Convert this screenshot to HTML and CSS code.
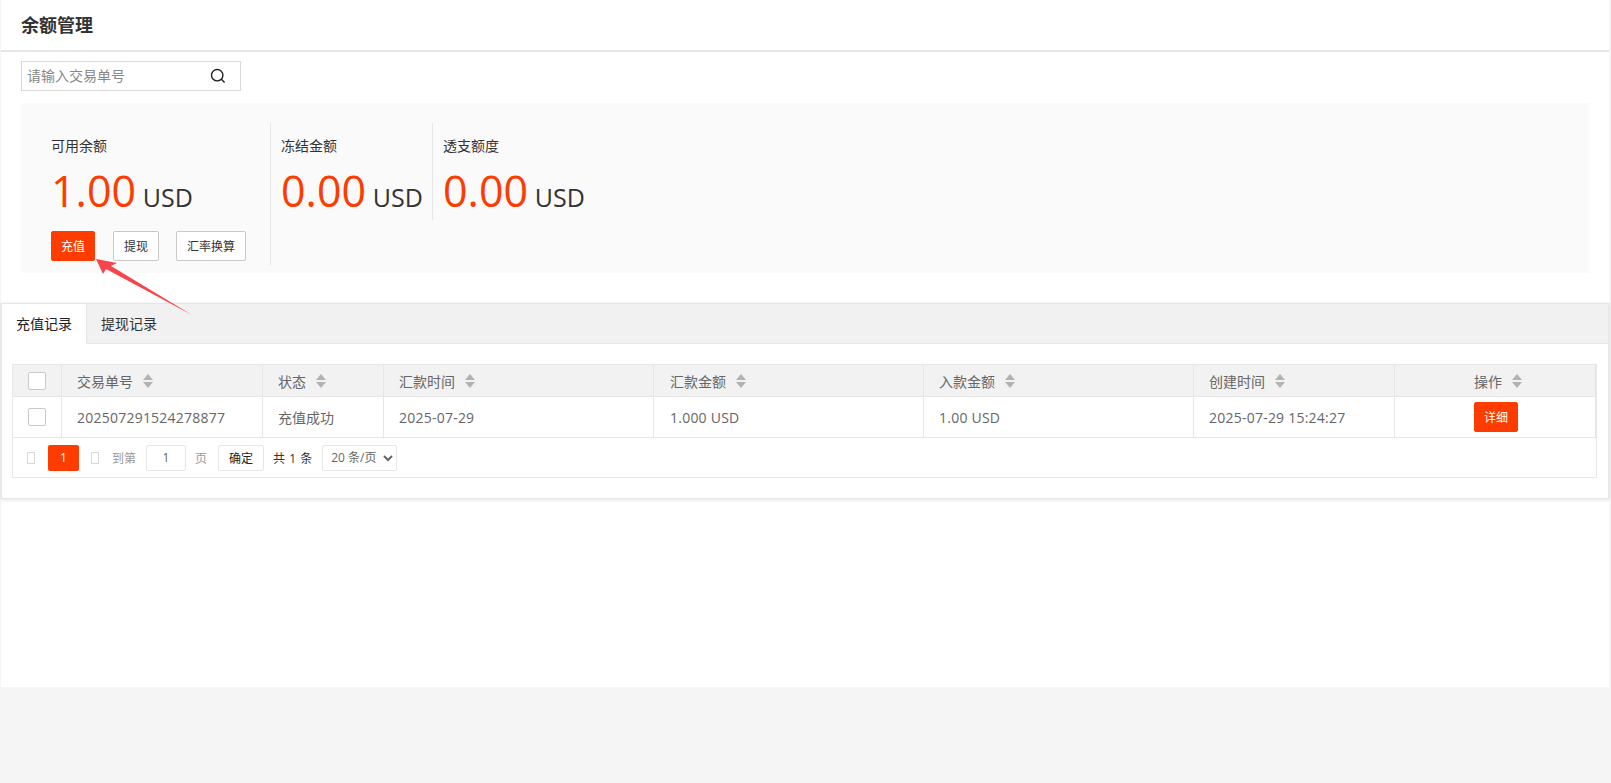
FILE: index.html
```html
<!DOCTYPE html>
<html lang="zh">
<head>
<meta charset="utf-8">
<title>余额管理</title>
<link rel="stylesheet" href="styles.css">
</head>
<body>
<main class="page">
  <header class="page-head"><h1>余额管理</h1></header>
  <div class="search">
    <input class="search-input" placeholder="请输入交易单号">
    <svg class="search-icon" viewBox="0 0 16 16" width="16" height="16"><circle cx="7.2" cy="7.2" r="5.7" fill="none" stroke="#222" stroke-width="1.4"/><path d="M11.3 11.3 14.6 14.6" stroke="#222" stroke-width="1.4" fill="none"/></svg>
  </div>
  <section class="summary">
    <div class="stat stat-main">
      <div class="stat-label">可用余额</div>
      <div class="stat-value"><b>1.00</b> <span>USD</span></div>
      <div class="stat-actions">
        <button class="btn btn-primary">充值</button>
        <button class="btn btn-w1">提现</button>
        <button class="btn btn-w2">汇率换算</button>
      </div>
    </div>
    <div class="stat stat-frozen">
      <div class="stat-label">冻结金额</div>
      <div class="stat-value"><b>0.00</b> <span>USD</span></div>
    </div>
    <div class="stat stat-credit">
      <div class="stat-label">透支额度</div>
      <div class="stat-value"><b>0.00</b> <span>USD</span></div>
    </div>
  </section>
  <section class="card">
    <div class="tabs">
      <div class="tab tab-active">充值记录</div>
      <div class="tab">提现记录</div>
    </div>
    <div class="card-body">
      <div class="table-box">
        <div class="row row-head">
          <div class="cell c0"><i class="check"></i></div>
          <div class="cell c1">交易单号<i class="sort"></i></div>
          <div class="cell c2">状态<i class="sort"></i></div>
          <div class="cell c3">汇款时间<i class="sort"></i></div>
          <div class="cell c4">汇款金额<i class="sort"></i></div>
          <div class="cell c5">入款金额<i class="sort"></i></div>
          <div class="cell c6">创建时间<i class="sort"></i></div>
          <div class="cell c7 center">操作<i class="sort"></i></div>
        </div>
        <div class="row row-body">
          <div class="cell c0"><i class="check"></i></div>
          <div class="cell c1 num">202507291524278877</div>
          <div class="cell c2">充值成功</div>
          <div class="cell c3 num">2025-07-29</div>
          <div class="cell c4 num">1.000 USD</div>
          <div class="cell c5 num">1.00 USD</div>
          <div class="cell c6 num">2025-07-29 15:24:27</div>
          <div class="cell c7 center"><button class="btn btn-primary btn-detail">详细</button></div>
        </div>
        <div class="pager">
          <i class="tofu"></i>
          <span class="page-cur">1</span>
          <i class="tofu tofu-next"></i>
          <span class="pager-text pt-goto">到第</span>
          <input class="page-input" value="1">
          <span class="pager-text pt-page">页</span>
          <button class="page-ok">确定</button>
          <span class="page-total">共 1 条</span>
          <select class="page-size"><option>20 条/页</option></select>
        </div>
      </div>
    </div>
  </section>
  <svg class="arrow" viewBox="0 0 115 70" width="115" height="70"><polygon points="11,9 32,13 26,16 107,65 21,19 18,24" fill="#f5444a"/></svg>
</main>
</body>
</html>
```
FILE: styles.css
```css
* { box-sizing: border-box; }
html, body { margin: 0; height: 100%; }
body {
  background: #f5f5f5;
  font-family: "Open Sans", "Noto Sans CJK SC", sans-serif;
  color: #333;
  font-size: 14px;
  overflow: hidden;
}
.page {
  position: relative;
  margin: 0 2px 0 1px;
  height: 687px;
  background: #fff;
}
.page-head {
  height: 52px;
  padding: 0 20px 3px;
  border-bottom: 2px solid #e6e6e6;
  display: flex;
  align-items: center;
}
.page-head h1 { margin: 0; font-size: 18px; font-weight: 700; color: #333; }
.search {
  margin: 9px 0 0 20px;
  width: 220px;
  height: 30px;
  border: 1px solid #d9d9d9;
  display: flex;
  align-items: center;
}
.search-input {
  flex: 1;
  min-width: 0;
  height: 100%;
  border: 0;
  outline: 0;
  padding: 0 5px 2px;
  font: inherit;
  font-size: 14px;
  background: transparent;
}
.search-input::placeholder { color: #888; }
.search-icon { margin-right: 14px; flex: none; }
.summary {
  margin: 12px 20px 0;
  height: 170px;
  background: #fafafa;
  display: flex;
  align-items: flex-start;
  padding-top: 20px;
}
.stat { border-right: 1px solid #e6e6e6; }
.stat-main { width: 250px; height: 142px; padding: 13px 0 0 30px; }
.stat-frozen { width: 162px; height: 97px; padding: 13px 0 0 10px; }
.stat-credit { padding: 13px 0 0 10px; border: 0; }
.stat-label { font-size: 14px; line-height: 20px; color: #333; }
.stat-value { height: 61px; line-height: 61px; white-space: nowrap; margin-top: 4px; }
.stat-value b { font-size: 43px; font-weight: 400; color: #ff3c00; }
.stat-value span { font-size: 25px; color: #333; margin-left: 3px; }
.stat-actions { display: flex; margin-top: 10px; }
.btn {
  height: 30px;
  border: 1px solid #c9c9c9;
  border-radius: 2px;
  background: #fff;
  color: #333;
  font: inherit;
  font-size: 12px;
  padding: 0;
  cursor: pointer;
}
.btn-primary { width: 44px; background: #ff3c00; border-color: #ff3c00; color: #fff; }
.btn-w1 { width: 46px; margin-left: 18px; }
.btn-w2 { width: 70px; margin-left: 17px; }
.card {
  margin-top: 30px;
  height: 196px;
  border: 1px solid #e6e6e6;
  box-shadow: 0 1px 4px rgba(0,0,0,.12);
  background: #fff;
}
.tabs {
  display: flex;
  height: 40px;
  background: #f1f1f1;
  border-bottom: 1px solid #e6e6e6;
}
.tab {
  height: 40px;
  padding: 0 14px;
  line-height: 40px;
  color: #333;
  font-size: 14px;
  white-space: nowrap;
}
.tab-active { width: 85px; background: #fff; color: #222; border-right: 1px solid #e6e6e6; }
.card-body { padding: 20px 11px 0 10px; }
.table-box { border: 1px solid #e6e6e6; height: 114px; }
.row { display: flex; }
.row-head { height: 32px; background: #f2f2f2; border-bottom: 1px solid #e6e6e6; }
.row-body { height: 41px; border-bottom: 1px solid #e6e6e6; }
.cell {
  display: flex;
  align-items: center;
  padding-left: 15px;
  border-right: 1px solid #e6e6e6;
  color: #666;
  flex: none;
  white-space: nowrap;
}
.num { letter-spacing: .23px; }
.center { justify-content: center; padding-left: 2px; }
.row-head .center { padding-left: 6px; }
.c0 { width: 49px; }
.c1 { width: 201px; }
.c2 { width: 121px; }
.c3 { width: 270px; }
.c4 { width: 270px; padding-left: 16px; }
.c5 { width: 270px; }
.c6 { width: 201px; }
.c7 { width: 201px; }
.check { width: 18px; height: 18px; border: 1px solid #c9c9c9; border-radius: 2px; background: #fff; display: block; }
.sort { position: relative; display: block; width: 10px; height: 14px; margin-left: 10px; }
.sort::before, .sort::after {
  content: "";
  position: absolute;
  left: 0;
  border-left: 5px solid transparent;
  border-right: 5px solid transparent;
}
.sort::before { top: 0; border-bottom: 6px solid #b2b2b2; }
.sort::after { bottom: 0; border-top: 6px solid #b2b2b2; }
.pager { display: flex; align-items: center; height: 39px; padding-left: 14px; }
.tofu { display: block; width: 8px; height: 12px; border: 1px solid #d8d8d8; flex: none; }
.page-cur {
  width: 31px; height: 26px; margin-left: 13px;
  background: #ff3c00; color: #fff; border-radius: 2px;
  display: flex; align-items: center; justify-content: center;
  font-size: 12px;
}
.tofu-next { margin-left: 12px; }
.pager-text { color: #999; font-size: 12px; }
.pt-goto { margin-left: 13px; }
.page-input {
  width: 40px; height: 26px; margin-left: 10px;
  border: 1px solid #e6e6e6; border-radius: 2px;
  text-align: center; font: inherit; font-size: 12px; color: #666; padding: 0;
}
.pt-page { margin-left: 9px; }
.page-ok {
  width: 46px; height: 26px; margin-left: 11px;
  border: 1px solid #e6e6e6; border-radius: 2px; background: #fff;
  font: inherit; font-size: 12px; color: #222; padding: 0;
}
.page-total { margin-left: 9px; font-size: 12px; color: #333; word-spacing: 1px; }
.page-size {
  width: 75px; height: 26px; margin-left: 10px;
  border: 1px solid #e6e6e6; border-radius: 2px; background: #fff;
  font: inherit; font-size: 12px; color: #666; padding: 0 2px 0 4px;
}
.arrow { position: absolute; left: 84px; top: 250px; }
```
